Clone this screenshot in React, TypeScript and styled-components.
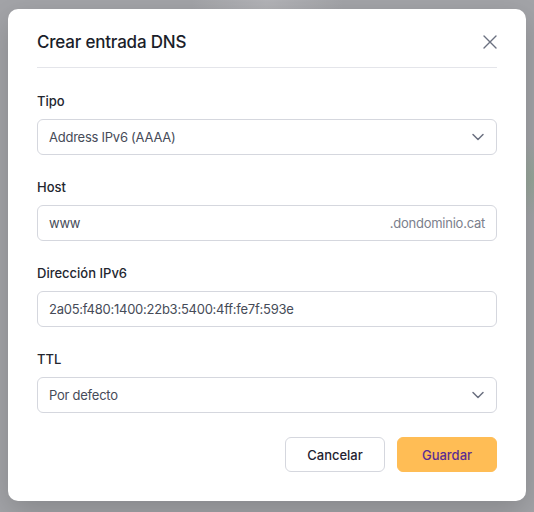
import styled, { createGlobalStyle } from "styled-components";
import { ChevronDown } from "lucide-react";

const GlobalStyle = createGlobalStyle`
  html, body {
    margin: 0;
    padding: 0;
    background: #a3a4a8;
    font-family: Inter, "Noto Sans", sans-serif;
  }
  * {
    box-sizing: border-box;
  }
`;

export default function App() {
  return (
    <>
      <GlobalStyle />
      <Backdrop>
        <Modal>
          <Header>
            <Title>Crear entrada DNS</Title>
            <CloseButton aria-label="Cerrar">
              <svg width="14" height="14" viewBox="0 0 14 14" fill="none">
                <path d="M1 1L13 13M13 1L1 13" stroke="#6b7080" strokeWidth="1.4" strokeLinecap="round" />
              </svg>
            </CloseButton>
          </Header>

          <Form>
            <Field>
              <Label>Tipo</Label>
              <Box>
                <Value>Address IPv6 (AAAA)</Value>
                <ChevronDown size={20} strokeWidth={1.8} color="#6b7080" />
              </Box>
            </Field>

            <Field>
              <Label>Host</Label>
              <Box>
                <Value>www</Value>
                <Suffix>.dondominio.cat</Suffix>
              </Box>
            </Field>

            <Field>
              <Label>Dirección IPv6</Label>
              <Box>
                <Value>2a05:f480:1400:22b3:5400:4ff:fe7f:593e</Value>
              </Box>
            </Field>

            <Field>
              <Label>TTL</Label>
              <Box>
                <Value>Por defecto</Value>
                <ChevronDown size={20} strokeWidth={1.8} color="#6b7080" />
              </Box>
            </Field>
          </Form>

          <Footer>
            <Button>Cancelar</Button>
            <Button $primary>Guardar</Button>
          </Footer>
        </Modal>
      </Backdrop>
    </>
  );
}

const Backdrop = styled.div`
  height: 512px;
  display: flex;
  align-items: flex-start;
  justify-content: center;
  padding-top: 9px;
  background:
    radial-gradient(circle at 100% 35%, rgba(140, 170, 140, 0.5), transparent 6%),
    radial-gradient(ellipse at 50% 0%, rgba(190, 190, 194, 0.6), transparent 20%),
    #a3a4a8;
`;

const Modal = styled.div`
  width: 518px;
  background: #ffffff;
  border-radius: 10px;
  padding: 0 29px 29px;
  box-shadow: 0 10px 30px rgba(0, 0, 0, 0.18);
`;

const Header = styled.div`
  display: flex;
  align-items: center;
  justify-content: space-between;
  padding: 21px 0 13px;
  border-bottom: 1px solid #e4e5ea;
`;

const Title = styled.h2`
  margin: 0;
  font-size: 17px;
  line-height: 24px;
  font-weight: 450;
  letter-spacing: -0.2px;
  color: #1b1e2a;
`;

const CloseButton = styled.button`
  display: flex;
  align-items: center;
  justify-content: center;
  padding: 0;
  background: none;
  border: none;
  cursor: pointer;
`;

const Form = styled.div`
  display: flex;
  flex-direction: column;
  gap: 22px;
  padding-top: 23px;
`;

const Field = styled.div`
  display: flex;
  flex-direction: column;
  gap: 8px;
`;

const Label = styled.label`
  font-size: 13px;
  line-height: 20px;
  font-weight: 450;
  color: #23262f;
`;

const Box = styled.div`
  height: 36px;
  display: flex;
  align-items: center;
  justify-content: space-between;
  padding: 0 8px 0 11px;
  border: 1px solid #d5d7de;
  border-radius: 6px;
  background: #ffffff;
`;

const Value = styled.span`
  font-size: 13px;
  letter-spacing: -0.25px;
  color: #464b58;
`;

const Suffix = styled.span`
  font-size: 13px;
  letter-spacing: -0.25px;
  color: #7b808c;
  padding-right: 3px;
`;

const Footer = styled.div`
  display: flex;
  justify-content: flex-end;
  gap: 12px;
  margin-top: 24px;
`;

const Button = styled.button<{ $primary?: boolean }>`
  width: 100px;
  height: 35px;
  border-radius: 6px;
  font-family: inherit;
  font-size: 13px;
  font-weight: 500;
  cursor: pointer;
  border: 1px solid ${(p) => (p.$primary ? "#ffbd55" : "#d5d7de")};
  background: ${(p) => (p.$primary ? "#ffbd55" : "#ffffff")};
  color: ${(p) => (p.$primary ? "#5b2d93" : "#1f2230")};
`;
